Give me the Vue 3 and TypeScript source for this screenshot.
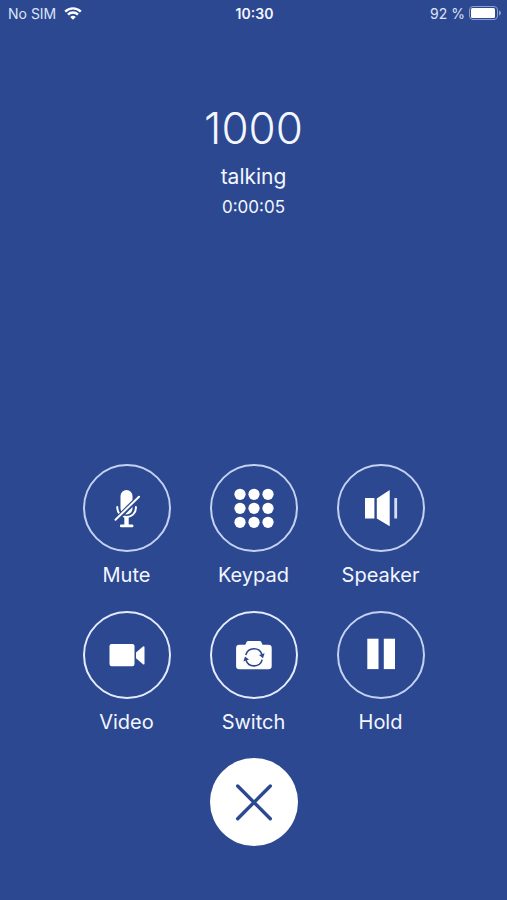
<script setup lang="ts">
import { ref } from 'vue'

type ActionId = 'mute' | 'keypad' | 'speaker' | 'video' | 'switch' | 'hold'

interface Action {
  id: ActionId
  label: string
  strong?: boolean
}

const actions: Action[] = [
  { id: 'mute', label: 'Mute' },
  { id: 'keypad', label: 'Keypad' },
  { id: 'speaker', label: 'Speaker' },
  { id: 'video', label: 'Video', strong: true },
  { id: 'switch', label: 'Switch', strong: true },
  { id: 'hold', label: 'Hold' },
]

const keypadDots = [30, 44, 58].flatMap((y) => [30, 44, 58].map((x) => ({ x, y })))

const callerNumber = ref('1000')
const callState = ref('talking')
const duration = ref('0:00:05')
</script>

<template>
  <main class="call-screen">
    <header class="status-bar">
      <div class="carrier">
        <span>No SIM</span>
        <svg class="wifi" viewBox="0 0 18 13" aria-hidden="true">
          <path d="M1.2 4.6a11 11 0 0 1 15.6 0M4 7.6a7 7 0 0 1 10 0" />
          <path class="solid" d="M9 12.8 6.2 10a4 4 0 0 1 5.6 0z" />
        </svg>
      </div>
      <time class="clock">10:30</time>
      <div class="power">
        <span>92 %</span>
        <svg class="battery" viewBox="0 0 32 14" aria-hidden="true">
          <rect class="shell" x="0.5" y="0.5" width="28" height="13" rx="3.5" />
          <rect class="charge" x="2" y="2" width="24" height="10" rx="1.5" />
          <path class="tip" d="M30 4.5q2 .8 2 2.5t-2 2.5z" />
        </svg>
      </div>
    </header>

    <section class="caller">
      <h1 class="number">{{ callerNumber }}</h1>
      <p class="state">{{ callState }}</p>
      <p class="duration">{{ duration }}</p>
    </section>

    <section class="controls">
      <div class="actions">
        <button v-for="action in actions" :key="action.id" type="button" class="action">
          <span class="ring" :class="{ strong: action.strong }">
            <svg class="icon" viewBox="0 0 88 88" aria-hidden="true">
              <g v-if="action.id === 'mute'">
                <rect x="37.5" y="26" width="12" height="24.5" rx="6" />
                <path class="line" d="M34.3 43v1a9.3 9 0 0 0 18.6 0v-1" />
                <rect x="41.3" y="53" width="4.4" height="9" />
                <rect x="37" y="60.6" width="13.4" height="2.6" rx="1" />
                <path class="slash-gap" d="M32.5 56.5 57 32" />
                <path class="slash" d="M32.5 55.7 56 32.7" />
              </g>
              <g v-else-if="action.id === 'keypad'">
                <circle v-for="dot in keypadDots" :key="`${dot.x}-${dot.y}`" :cx="dot.x" :cy="dot.y + 0.3" r="5.6" />
              </g>
              <g v-else-if="action.id === 'speaker'">
                <rect x="28" y="34" width="9.4" height="20.5" />
                <path d="M39.8 34.5 52.7 26v36.3L39.8 54.5z" />
                <rect class="faint" x="57.3" y="34" width="2.8" height="20.5" />
              </g>
              <g v-else-if="action.id === 'video'">
                <rect x="26.5" y="33" width="25" height="22.3" rx="2.2" />
                <path d="M53 41.5 60 35.6q1.5-.8 1.5 1v15.6q0 1.8-1.5 1L53 47.3z" />
              </g>
              <g v-else-if="action.id === 'switch'">
                <path d="M29.3 33.7h6l1.2-2.6q.5-1.1 1.8-1.1h11.2q1.3 0 1.8 1.1l1.2 2.6h6q3.2 0 3.2 3.2v18.2q0 3.2-3.2 3.2H29.3q-3.2 0-3.2-3.2V36.9q0-3.2 3.2-3.2z" />
                <path class="cut-line" d="M35.8 44a8.5 8.5 0 0 1 16.2-.6M52.2 48.6a8.5 8.5 0 0 1-16.2.6" />
                <path class="cut" d="M49 44 54.6 42.2 53 47.2zM39 48.6 33.4 50.4 35 45.4z" />
              </g>
              <g v-else>
                <rect x="30.3" y="27.7" width="11.2" height="30.4" />
                <rect x="46.8" y="27.7" width="11.2" height="30.4" />
              </g>
            </svg>
          </span>
          <span class="label">{{ action.label }}</span>
        </button>
      </div>
      <button type="button" class="hang-up" aria-label="End call">
        <svg class="icon" viewBox="0 0 88 88" aria-hidden="true">
          <path class="cross" d="M27.7 28 60.3 60.7M60.3 28 27.7 60.7" />
        </svg>
      </button>
    </section>
  </main>
</template>

<style>
body {
  background: #2c4891;
}
</style>

<style scoped>
.call-screen {
  --blue: #2c4891;
  display: flex;
  flex-direction: column;
  box-sizing: border-box;
  min-height: 100vh;
  padding-bottom: 54px;
  background: var(--blue);
  color: #f3f6ff;
  font-family: Inter, 'Liberation Sans', sans-serif;
}

.status-bar {
  display: grid;
  grid-template-columns: 1fr auto 1fr;
  align-items: center;
  height: 26px;
  padding: 0 6px 0 8px;
  font-size: 14px;
  color: #dce4f8;
}

.carrier,
.power {
  display: flex;
  align-items: center;
  gap: 8px;
}

.power {
  justify-content: flex-end;
  gap: 4px;
}

.clock {
  font-weight: 600;
  color: #f3f6ff;
}

.wifi {
  width: 18px;
  height: 13px;
  fill: none;
  stroke: #fff;
  stroke-width: 2.4;
}

.wifi .solid {
  fill: #fff;
  stroke: none;
}

.battery {
  width: 32px;
  height: 14px;
}

.shell {
  fill: none;
  stroke: #8c9fcd;
}

.charge {
  fill: #fff;
}

.tip {
  fill: #8c9fcd;
}

.caller {
  display: flex;
  flex-direction: column;
  align-items: center;
  padding-top: 74px;
}

.number,
.state,
.duration {
  margin: 0;
}

.number {
  font-size: 44px;
  font-weight: 300;
  line-height: 56px;
}

.state {
  margin-top: 7px;
  font-size: 21px;
  line-height: 28px;
}

.duration {
  margin-top: 4px;
  font-size: 17px;
  line-height: 24px;
}

.controls {
  display: flex;
  flex-direction: column;
  align-items: center;
  margin-top: auto;
}

.actions {
  display: grid;
  grid-template-columns: repeat(3, 88px);
  gap: 24px 39px;
}

.action {
  display: flex;
  flex-direction: column;
  align-items: center;
  padding: 0;
  border: 0;
  background: none;
  color: inherit;
  font: inherit;
  cursor: pointer;
}

.ring {
  display: block;
  box-sizing: border-box;
  width: 88px;
  height: 88px;
  border: 2px solid #c4d1f2;
  border-radius: 50%;
}

.ring.strong {
  border-color: #e4ebff;
}

.icon {
  display: block;
  width: 88px;
  height: 88px;
  fill: #fff;
}

.ring .icon {
  margin: -2px;
}

.line {
  fill: none;
  stroke: #fff;
  stroke-width: 2;
  stroke-linecap: round;
}

.slash-gap {
  stroke: var(--blue);
  stroke-width: 5;
}

.slash {
  stroke: #fff;
  stroke-width: 2;
  stroke-linecap: round;
}

.faint {
  fill: #d4def6;
}

.cut-line {
  fill: none;
  stroke: var(--blue);
  stroke-width: 1.6;
}

.cut {
  fill: var(--blue);
}

.label {
  font-size: 20px;
  line-height: 24px;
  margin-top: 11px;
}

.hang-up {
  width: 88px;
  height: 88px;
  margin-top: 24px;
  padding: 0;
  border: 0;
  border-radius: 50%;
  background: #fff;
  cursor: pointer;
}

.cross {
  stroke: var(--blue);
  stroke-width: 3.4;
  stroke-linecap: round;
}
</style>
